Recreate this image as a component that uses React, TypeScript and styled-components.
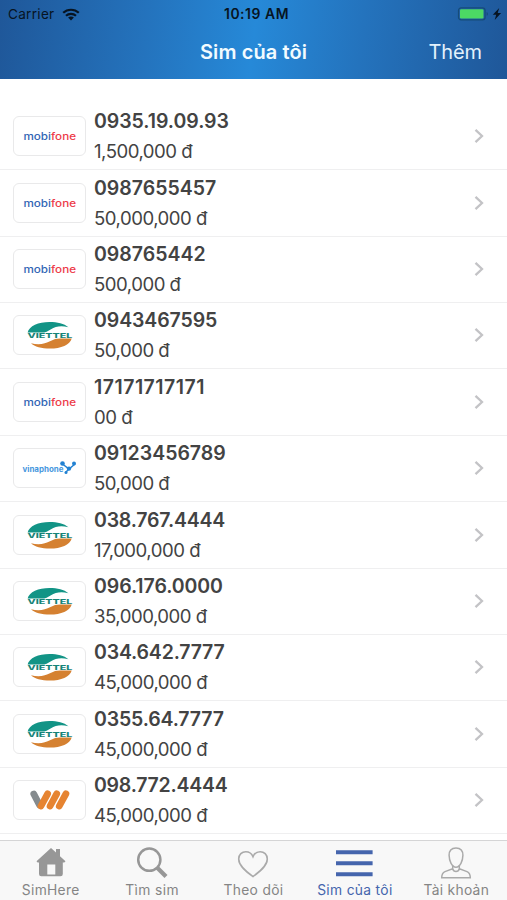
import React from "react";
import styled, { createGlobalStyle } from "styled-components";

const GlobalStyle = createGlobalStyle`
  * { box-sizing: border-box; }
  body { margin: 0; background: #fff; font-family: Inter, "Liberation Sans", sans-serif; }
`;

const Screen = styled.div`
  width: 507px;
  height: 900px;
  display: flex;
  flex-direction: column;
  overflow: hidden;
  background: #fff;
`;

const Header = styled.header`
  flex: none;
  height: 79px;
  background: linear-gradient(97deg, #1f5799 0%, #2473bd 29%, #2689d8 50%, #2473bd 71%, #1f5799 100%);
`;

const StatusBar = styled.div`
  display: grid;
  grid-template-columns: 1fr auto 1fr;
  align-items: center;
  height: 27px;
  padding: 0 5px 0 8px;
  color: #071422;
`;

const Carrier = styled.div`
  display: flex;
  align-items: center;
  gap: 7px;
  font-size: 13.6px;
  line-height: 28px;
  letter-spacing: 0.28px;
`;

const Clock = styled.div`
  font-size: 13.9px;
  line-height: 28px;
  font-weight: 600;
  letter-spacing: 0.55px;
  padding-left: 3px;
`;

const Power = styled.div`
  display: flex;
  justify-content: flex-end;
`;

const NavBar = styled.div`
  display: grid;
  grid-template-columns: 1fr auto 1fr;
  height: 50px;
  line-height: 51px;
  padding: 0 25px;
  color: #f2fbff;
`;

const NavTitle = styled.h1`
  grid-column: 2;
  margin: 0;
  font-size: 20px;
  font-weight: 600;
  letter-spacing: 0.1px;
`;

const NavAction = styled.div`
  text-align: right;
  font-size: 20px;
  letter-spacing: -0.1px;
  color: #e3f1fc;
`;

const List = styled.main`
  flex: 1;
  min-height: 0;
  overflow: hidden;
  padding-top: 25px;
`;

const Row = styled.div`
  display: flex;
  align-items: center;
  height: 66.36px;
  padding: 0 22px 0.6px 13px;
  border-bottom: 1px solid #efeff0;
`;

const LogoBox = styled.div`
  display: flex;
  flex: none;
  width: 73px;
  height: 40px;
  border: 1px solid #e9e9ea;
  border-radius: 6px;
`;

const Details = styled.div`
  flex: 1;
  margin-left: 8px;
  color: #434343;
`;

const Phone = styled.div<{ $spacing: number }>`
  font-size: 19.5px;
  font-weight: 600;
  line-height: 30px;
  letter-spacing: ${(p) => p.$spacing}px;
`;

const Price = styled.div`
  font-size: 18.6px;
  line-height: 30px;
  letter-spacing: -0.5px;
`;

const TabBar = styled.nav`
  flex: none;
  display: grid;
  grid-template-columns: repeat(5, 1fr);
  height: 60px;
  background: #f8f8f8;
  border-top: 1px solid #d5d5d6;
`;

const Tab = styled.div<{ $active?: boolean }>`
  display: flex;
  flex-direction: column;
  align-items: center;
  padding-top: 4px;
  color: ${(p) => (p.$active ? "#4565ad" : "#858585")};
`;

const TabLabel = styled.span<{ $spacing: number }>`
  font-size: 13.8px;
  line-height: 18px;
  white-space: nowrap;
  letter-spacing: ${(p) => p.$spacing}px;
`;

const Wifi = () => (
  <svg width="18" height="13" viewBox="0 0 18 13" fill="none" stroke="#071422" strokeWidth="2.2">
    <path d="M1.2 4.8C5.5.7 12.5.7 16.8 4.8" />
    <path d="M4 7.8c2.8-2.6 7.2-2.6 10 0" />
    <path d="M9 12.4 6.1 9.6c1.5-1.5 4.3-1.5 5.8 0Z" fill="#071422" stroke="none" />
  </svg>
);

const Battery = () => (
  <svg width="45" height="14" viewBox="0 0 45 14">
    <rect x="1.5" y=".8" width="26.6" height="12" rx="2.6" fill="none" stroke="#164c79" strokeWidth="1.2" />
    <rect x="3" y="2.2" width="23.5" height="9.3" rx="1.2" fill="#4cd964" />
    <path d="M29.6 5v3.8q1.4-.6 1.4-1.9T29.6 5Z" fill="#164c79" />
    <path d="m42.2 1-6.4 6.8h3.4l-1.5 5.2 6.4-7h-3.4Z" fill="#071422" />
  </svg>
);

const Mobifone = () => (
  <svg width="71" height="38" viewBox="0 0 71 38">
    <g transform="translate(9.5 22.7) scale(1.28 1)" fontFamily="Inter" fontSize="9.8" fontWeight="500">
      <text textLength="41" lengthAdjust="spacingAndGlyphs">
        <tspan fill="#3266b5">mobi</tspan><tspan fill="#ed3b48">fone</tspan>
      </text>
    </g>
  </svg>
);

const Viettel = () => (
  <svg width="71" height="38" viewBox="0 0 71 38">
    <path d="M13.6 16.6C15 10 24.500 6 35.500 6c8 0 14.500 1.600 18.900 5.200-7-1.900-12.900-1-17.400 2-3 2-5.500 3.400-9.500 3.400Z" fill="#129486" />
    <path d="M57.700 22.400C56 28.600 47 32.600 36 32.600c-8.500 0-15.500-1.800-19-5.300 8 1.800 14 .7 19.500-2.300 3.500-1.900 5.500-2.600 9.500-2.600Z" fill="#d58131" />
    <g transform="translate(13.5 21.7) scale(1.6 1)">
      <text fontFamily="Inter" fontSize="6.2" fontWeight="800" fill="#168478" textLength="28" lengthAdjust="spacingAndGlyphs">VIETTEL</text>
    </g>
  </svg>
);

const Vinaphone = () => (
  <svg width="71" height="38" viewBox="0 0 71 38">
    <text x="8.5" y="23.4" fontFamily="Inter" fontSize="8" fontWeight="700" fill="#4798de" textLength="41" lengthAdjust="spacingAndGlyphs">vinaphone</text>
    <g fill="#2382d2" stroke="#2382d2">
      <path d="m48.5 15 6.5 5 6-5M55 20l-3.500 3.500" fill="none" strokeWidth="1.5" />
      <circle cx="48.5" cy="14.5" r="2.3" stroke="none" />
      <circle cx="55" cy="19.6" r="2.2" stroke="none" />
      <circle cx="60" cy="14.6" r="2" stroke="none" />
      <circle cx="52" cy="23.6" r="1.5" stroke="none" />
    </g>
  </svg>
);

const Vietnamobile = () => (
  <svg width="71" height="38" viewBox="0 0 71 38" fill="none" strokeLinecap="round" strokeWidth="6.8">
    <path d="m19.8 13 5.700 11" stroke="#858b8e" />
    <path d="m33.6 12.8-6.600 12.200" stroke="#e68431" />
    <path d="m42.7 12.8-6.600 12.200" stroke="#e68431" />
    <path d="m51.9 12.8-6.600 12.200" stroke="#e68431" />
  </svg>
);

const Chevron = () => (
  <svg width="12" height="16" viewBox="0 0 12 16" fill="none" stroke="#c3c3c6" strokeWidth="2.3">
    <path d="m2.5 1.800 6.500 6.200-6.500 6.200" />
  </svg>
);

const HomeIcon = () => (
  <svg width="38" height="36" viewBox="0 0 38 36" fill="#979797">
    <path d="M4.500 16.200 19 3l5 4.600V4h4v7.200l5.500 5-1.200 1.400h-1.500V29q0 2.300-2.300 2.300H9.300Q7 31.300 7 29V17.600H5.600Z" />
    <path d="M15.300 19.500h8v10h-8Z" fill="#f8f8f8" />
  </svg>
);

const SearchIcon = () => (
  <svg width="38" height="36" viewBox="0 0 38 36" fill="none" stroke="#979797">
    <circle cx="16.3" cy="14.7" r="11.1" strokeWidth="2.5" />
    <path d="m24 22.500 9 9" strokeWidth="4.2" />
  </svg>
);

const HeartIcon = () => (
  <svg width="38" height="36" viewBox="0 0 38 36" fill="none" stroke="#aaa" strokeWidth="1.6">
    <path d="M19 31.500C13.500 27.500 4.700 21.200 4.700 14 4.700 9.500 8 6.700 11.800 6.700c3.300 0 6 2 7.200 5 1.200-3 3.900-5 7.200-5 3.800 0 7.100 2.800 7.100 7.300 0 7.200-8.800 13.500-14.300 17.500Z" />
  </svg>
);

const MenuIcon = () => (
  <svg width="38" height="36" viewBox="0 0 38 36" stroke="#4565ad" strokeWidth="4">
    <path d="M0 7.300h36.600M0 18.200h36.600M0 29.200h36.600" />
  </svg>
);

const UserIcon = () => (
  <svg width="38" height="36" viewBox="0 0 38 36" fill="none" stroke="#aaa" strokeWidth="1.5">
    <path d="M19 2.900c-4.800 0-7 3-6.900 7.300.1 5.800 2.800 12 6.900 12s6.800-6.200 6.900-12C26 5.900 23.800 2.900 19 2.900Z" />
    <path d="M15.700 20.500v3.300L8 26.600c-2.200.9-3.300 3.300-3.300 6.200h28.600c0-2.900-1.100-5.300-3.300-6.200l-7.700-2.800v-3.300M15.700 23.800c1 3.700 5.600 3.700 6.600 0" />
  </svg>
);

const logos = { mobifone: Mobifone, viettel: Viettel, vinaphone: Vinaphone, vietnamobile: Vietnamobile };

type Sim = { carrier: keyof typeof logos; phone: string; price: string; phoneSpacing?: number };

const sims: Sim[] = [
  { carrier: "mobifone", phone: "0935.19.09.93", price: "1,500,000 đ", phoneSpacing: -0.05 },
  { carrier: "mobifone", phone: "0987655457", price: "50,000,000 đ" },
  { carrier: "mobifone", phone: "098765442", price: "500,000 đ" },
  { carrier: "viettel", phone: "0943467595", price: "50,000 đ", phoneSpacing: -0.1 },
  { carrier: "mobifone", phone: "17171717171", price: "00 đ", phoneSpacing: 0.48 },
  { carrier: "vinaphone", phone: "09123456789", price: "50,000 đ" },
  { carrier: "viettel", phone: "038.767.4444", price: "17,000,000 đ", phoneSpacing: -0.2 },
  { carrier: "viettel", phone: "096.176.0000", price: "35,000,000 đ", phoneSpacing: -0.08 },
  { carrier: "viettel", phone: "034.642.7777", price: "45,000,000 đ", phoneSpacing: -0.18 },
  { carrier: "viettel", phone: "0355.64.7777", price: "45,000,000 đ", phoneSpacing: -0.16 },
  { carrier: "vietnamobile", phone: "098.772.4444", price: "45,000,000 đ", phoneSpacing: -0.25 },
];

const tabs = [
  { label: "SimHere", Icon: HomeIcon, spacing: 0.3 },
  { label: "Tìm sim", Icon: SearchIcon, spacing: 0.4 },
  { label: "Theo dõi", Icon: HeartIcon, spacing: 0.35 },
  { label: "Sim của tôi", Icon: MenuIcon, spacing: 0.33, active: true },
  { label: "Tài khoản", Icon: UserIcon, spacing: 0.3 },
];

export default function App() {
  return (
    <Screen>
      <GlobalStyle />
      <Header>
        <StatusBar>
          <Carrier>Carrier <Wifi /></Carrier>
          <Clock>10:19 AM</Clock>
          <Power><Battery /></Power>
        </StatusBar>
        <NavBar>
          <NavTitle>Sim của tôi</NavTitle>
          <NavAction>Thêm</NavAction>
        </NavBar>
      </Header>
      <List>
        {sims.map((sim) => {
          const Logo = logos[sim.carrier];
          return (
            <Row key={sim.phone}>
              <LogoBox><Logo /></LogoBox>
              <Details>
                <Phone $spacing={sim.phoneSpacing ?? 0}>{sim.phone}</Phone>
                <Price>{sim.price}</Price>
              </Details>
              <Chevron />
            </Row>
          );
        })}
      </List>
      <TabBar>
        {tabs.map(({ label, Icon, spacing, active }) => (
          <Tab key={label} $active={active}>
            <Icon />
            <TabLabel $spacing={spacing}>{label}</TabLabel>
          </Tab>
        ))}
      </TabBar>
    </Screen>
  );
}
